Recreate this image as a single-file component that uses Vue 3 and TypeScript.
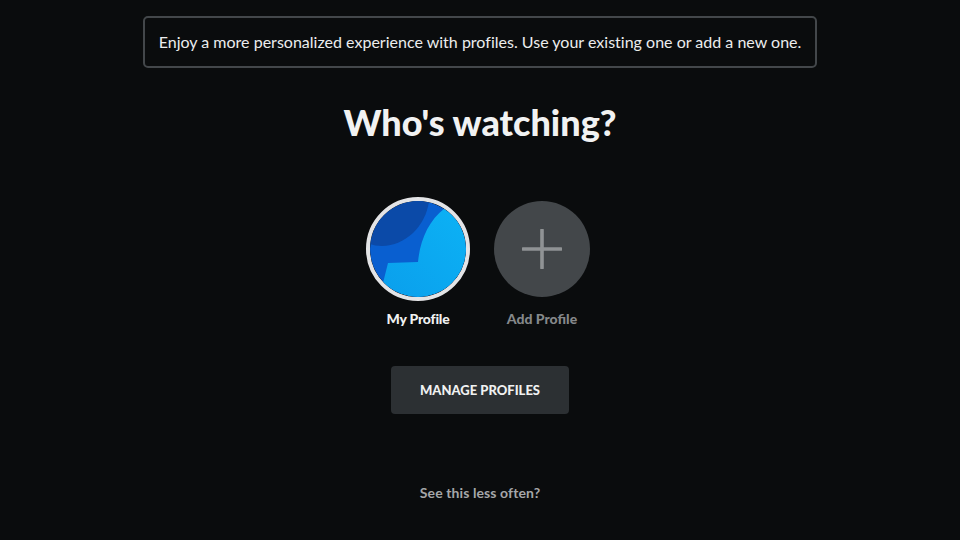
<script setup lang="ts">
interface Profile {
  name: string
}
const profile: Profile = { name: 'My Profile' }
</script>

<template>
  <main class="page">
    <p class="banner">Enjoy a more personalized experience with profiles. Use your existing one or add a new one.</p>
    <h1 class="title">Who's watching?</h1>
    <div class="profiles">
      <div class="profile">
        <div class="avatar">
          <svg viewBox="0 0 96 96" width="96" height="96">
            <defs>
              <clipPath id="round"><circle cx="48" cy="48" r="48" /></clipPath>
              <linearGradient id="light" x1="0" y1="1" x2="1" y2="0">
                <stop offset="0" stop-color="#0a9fec" />
                <stop offset="1" stop-color="#0cb2f5" />
              </linearGradient>
            </defs>
            <g clip-path="url(#round)">
              <rect width="96" height="96" fill="#095fd0" />
              <path d="M0 0H59C56 25 35 45 12 45C7 45 3 44 0 43Z" fill="#0b4aa8" />
              <path d="M75 7C58 20 50 40 48 61L18 62L13 82L30 96H96V7Z" fill="url(#light)" />
            </g>
          </svg>
        </div>
        <span class="name">{{ profile.name }}</span>
      </div>
      <div class="profile add">
        <div class="add-circle">
          <svg viewBox="0 0 40 40" width="40" height="40">
            <path d="M20 1V39M1 20H39" stroke="#909395" stroke-width="3.6" stroke-linecap="round" fill="none" />
          </svg>
        </div>
        <span class="name muted">Add Profile</span>
      </div>
    </div>
    <button class="manage" type="button">MANAGE PROFILES</button>
    <a class="less">See this less often?</a>
  </main>
</template>

<style scoped>
.page {
  width: 960px;
  height: 540px;
  box-sizing: border-box;
  background: #0a0c0d;
  padding-top: 16px;
  display: flex;
  flex-direction: column;
  align-items: center;
  font-family: "Lato", "Noto Sans", sans-serif;
  overflow: hidden;
}
.banner {
  margin: 0;
  width: 674px;
  height: 52px;
  box-sizing: border-box;
  border: 2px solid #43474a;
  border-radius: 5px;
  padding-bottom: 2px;
  display: flex;
  align-items: center;
  justify-content: center;
  color: #eceded;
  font-size: 16px;
  letter-spacing: 0.01px;
  white-space: nowrap;
}
.title {
  margin: 31px 0 0;
  height: 46px;
  line-height: 46px;
  color: #f1f2f2;
  font-size: 36px;
  font-weight: 900;
}
.profiles {
  margin-top: 52px;
  margin-right: 4px;
  display: flex;
  gap: 24px;
  align-items: flex-start;
}
.profile {
  width: 104px;
  display: flex;
  flex-direction: column;
  align-items: center;
}
.profile.add {
  width: 96px;
  padding-top: 4px;
}
.avatar {
  width: 104px;
  height: 104px;
  box-sizing: border-box;
  border: 4px solid #e3e4e6;
  border-radius: 50%;
  overflow: hidden;
}
.avatar svg {
  display: block;
}
.add-circle {
  width: 96px;
  height: 96px;
  margin-bottom: 4px;
  border-radius: 50%;
  background: #43474a;
  display: flex;
  align-items: center;
  justify-content: center;
}
.name {
  margin-top: 9px;
  line-height: 18px;
  font-size: 14px;
  font-weight: 900;
  color: #f0f1f1;
  white-space: nowrap;
}
.profile:first-child .name {
  letter-spacing: -0.2px;
}
.muted {
  color: #85888a;
}
.manage {
  margin-top: 38px;
  width: 178px;
  height: 48px;
  border: none;
  border-radius: 4px;
  background: #2c3033;
  color: #f0f1f1;
  font-family: inherit;
  font-size: 13px;
  font-weight: 900;
  padding: 0;
}
.less {
  margin-top: 70px;
  line-height: 18px;
  font-size: 14px;
  font-weight: 700;
  letter-spacing: 0.1px;
  color: #a5a7a9;
}
</style>
